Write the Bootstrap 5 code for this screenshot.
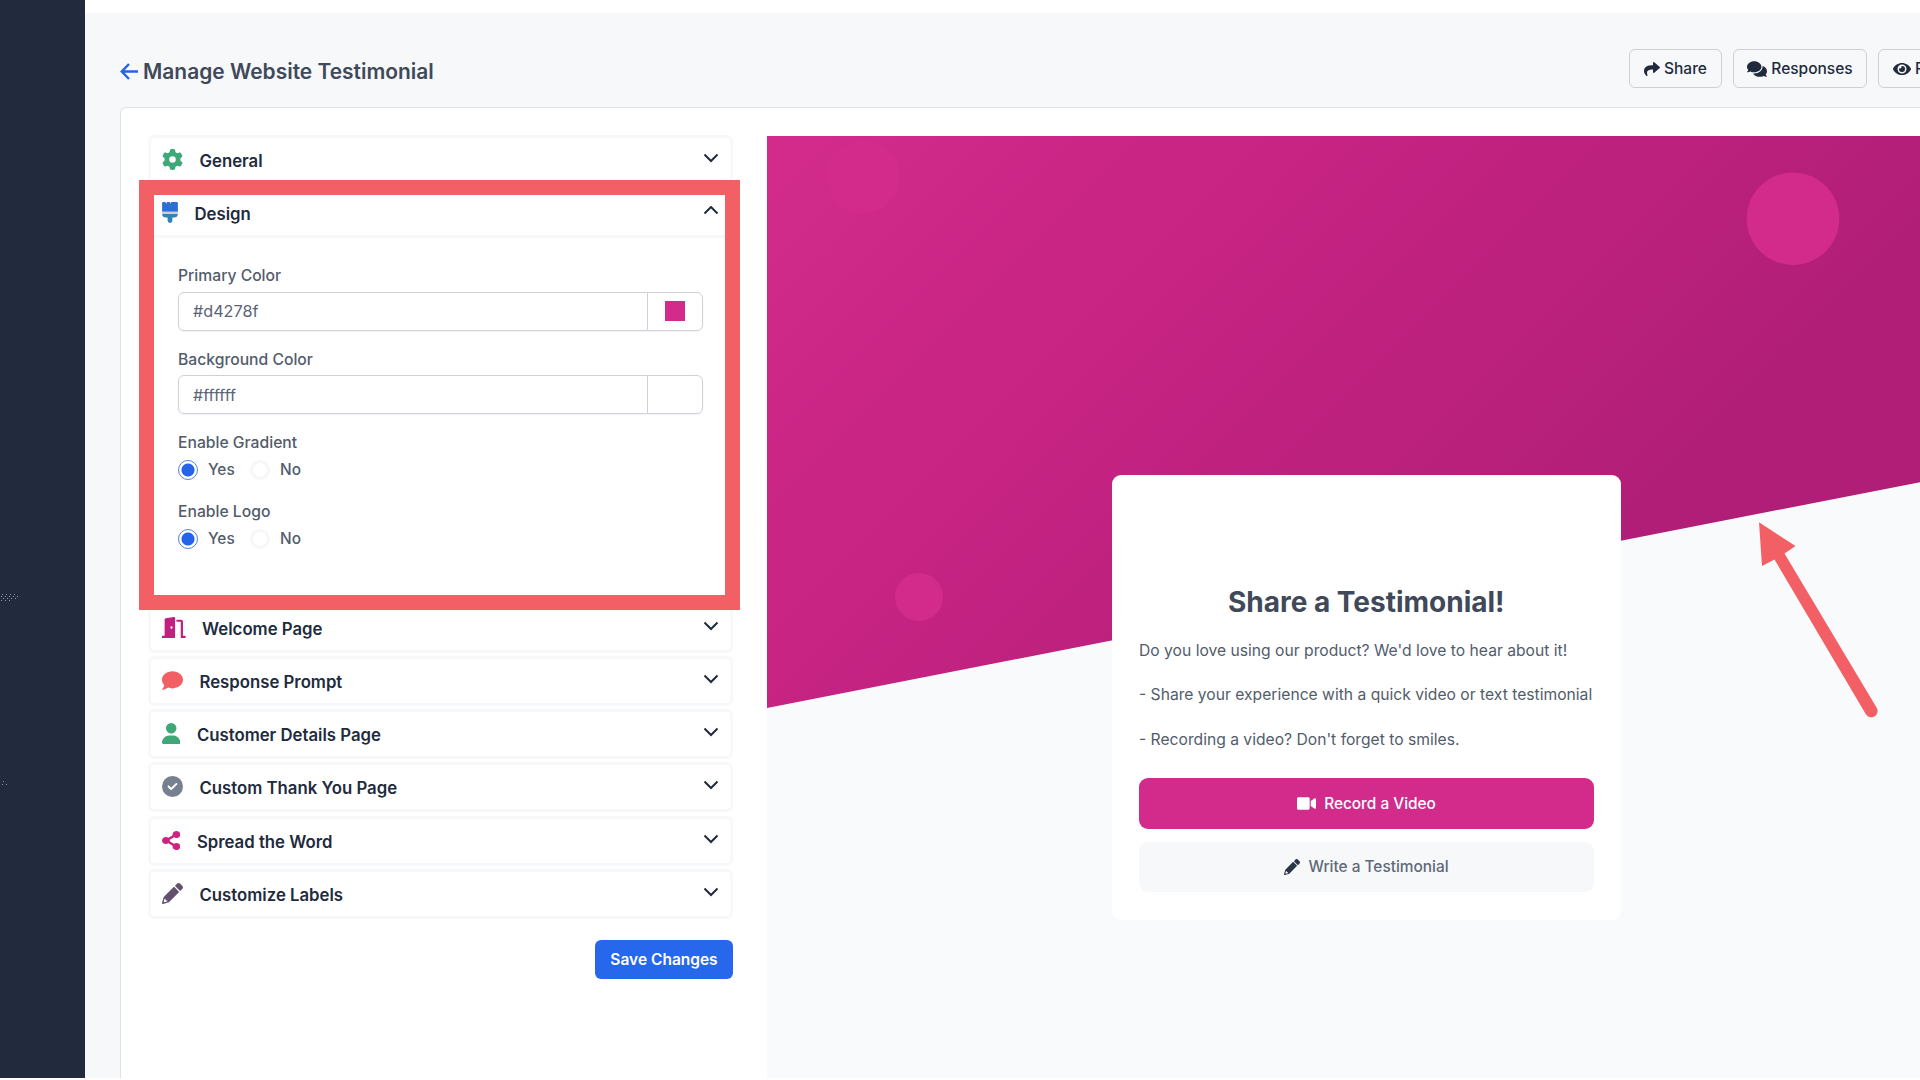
<!DOCTYPE html>
<html lang="en">
<head>
<meta charset="utf-8">
<meta name="viewport" content="width=device-width, initial-scale=1">
<title>Manage Website Testimonial</title>
<link href="https://cdn.jsdelivr.net/npm/bootstrap@5.3.0/dist/css/bootstrap.min.css" rel="stylesheet">
<style>
  body { font-family: Inter, "Liberation Sans", sans-serif; width: 1920px; height: 1080px; overflow: hidden; background: #fff; color: #525c6b; font-size: 15.4px; line-height: 24px; }
  svg { display: block; flex: none; fill: currentColor; }
  .shell { height: 1078px; }
  .side-rail { width: 85px; background: #212b3d; flex: none; color: #8c93a0; }
  .side-specks { left: 0; top: 590px; }
  .page-area { background: #f7f8fa; min-width: 0; }
  .top-strip { height: 13px; background: #fff; }
  .page-head { height: 94px; padding: 36px 0 0 35px; }
  .page-title { font-size: 20.95px; font-weight: 600; color: #3f4959; margin: 9px 0 0; line-height: 28px; }
  .title-text { margin-left: 4px; }
  .back-arrow { color: #2563eb; margin-top: 3.5px; }
  .head-actions { gap: 11px; margin-right: -70px; }
  .btn-outline-soft { height: 39px; border: 1px solid #cfcfd8; border-radius: 6px; padding: 0; font-size: 15.5px; font-weight: 500; color: #212b3d; gap: 4px; display: flex; align-items: center; justify-content: center; white-space: nowrap; }
  .w-share { width: 93px; }
  .w-responses { width: 134px; }
  .w-preview { width: 112px; justify-content: flex-start; padding-left: 14px; }
  .main-panel { margin-left: 35px; background: #fff; border: 1px solid #e0e1e7; border-right: 0; border-bottom: 0; border-top-left-radius: 6px; padding: 28px 0 0 27px; min-height: 0; }
  .settings { width: 585px; flex: none; gap: 3.2px; margin-top: -1px; }
  .setting { border: 3px solid #f7f8fa; border-radius: 6px; flex: none; background: #fff; }
  .setting-head { height: 44px; padding: 0 11.5px 0 11px; color: #212b3d; }
  .setting-head .glyph { margin-top: -1px; }
  .setting-head .chev { margin-top: -4px; }
  .setting-name { font-size: 16.75px; font-weight: 600; margin: 2px 0 0 16.5px; line-height: 24px; }
  .setting-body { height: 361.5px; border-top: 3px solid #f7f8fa; padding: 26px 27px 0 27px; }
  .field-label { font-size: 15.7px; font-weight: 500; line-height: 24px; margin: 0; }
  .color-field { height: 39px; margin: 3.5px 0 17px; border-radius: 6px; box-shadow: 0 1px 2px rgba(30,40,80,.06); }
  .color-field .form-control { border-color: #d0d0d9; color: #5a6474; font-size: 16.2px; padding: 0 14px; border-radius: 6px; }
  .color-field .input-group-text { width: 56px; border-color: #d0d0d9; background: #fff; justify-content: center; border-radius: 6px; padding: 0; }
  .swatch-box { width: 19.5px; height: 19.5px; background: #d22b8c; }
  .choice-row { height: 28px; margin: 1px 0 15.5px; font-weight: 500; }
  .dot { width: 20px; height: 20px; border-radius: 50%; border: 3px solid #f6f7f9; flex: none; margin-right: 10px; }
  .dot.on { border: 1px solid #5a7fd8; background: radial-gradient(circle, #2563eb 0 6px, #fff 7px); }
  .opt { width: 42px; }
  .btn-save { width: 138px; height: 39px; background: #2767ec; color: #fff; border-radius: 6px; font-size: 15.5px; font-weight: 600; margin-top: 18px; padding: 0; border: 0; }
  .callout-box { left: 138.7px; top: 179.5px; width: 601px; height: 430.5px; border: 15px solid #f26065; z-index: 5; }
  .preview { margin-left: 34px; background: #f9fafb; min-width: 0; padding-top: 339px; padding-left: 344.5px; }
  .preview-hero { left: 0; top: 0; }
  .testimonial { width: 509.5px; height: 445px; background: #fff; border-radius: 9px; padding: 109px 27.5px 0; }
  .testimonial h2 { font-size: 28px; font-weight: 700; color: #3f4959; text-align: center; line-height: 36px; margin: 0 0 19px; }
  .testimonial p { margin: 0 0 20.3px; line-height: 24px; white-space: nowrap; font-size: 15.67px; }
  .btn-cta { width: 100%; height: 50.5px; border-radius: 9px; border: 0; font-size: 15.4px; font-weight: 500; display: flex; align-items: center; justify-content: center; gap: 8.5px; padding: 0; }
  .btn-video { background: #d22b8c; color: #fff; margin-top: 26.5px; margin-bottom: 13px; }
  .btn-write { background: #f7f8fa; color: #5f6978; }
  .btn-write svg { color: #2b3548; }
  .callout-arrow { left: 1750px; top: 510px; z-index: 5; color: #f26065; }
</style>
<script src="https://cdn.jsdelivr.net/npm/bootstrap@5.3.0/dist/js/bootstrap.bundle.min.js"></script>
</head>
<body class="position-relative">
<svg class="d-none">
  <symbol id="pencil" viewBox="0 0 512 512"><path fill-rule="evenodd" d="M497.9 142.1l-46.1 46.1c-4.7 4.7-12.3 4.7-17 0l-111-111c-4.7-4.7-4.7-12.3 0-17l46.1-46.1c18.7-18.7 49.1-18.7 67.9 0l60.1 60.1c18.8 18.7 18.8 49.1 0 67.9zM284.2 99.8L41.6 342.4 .4 483.9c-2.9 16.4 11.4 30.6 27.8 27.8l141.5-41.3 242.6-242.6c4.7-4.7 4.7-12.3 0-17l-111-111c-4.8-4.7-12.4-4.7-17.1 0zM88 384v40h46l-10 28-62 18-20-20 18-62z"/></symbol>
  <symbol id="down" viewBox="0 0 16 10"><path d="M1.5 1.5 8 8l6.5-6.5" fill="none" stroke="currentColor" stroke-width="2"/></symbol>
</svg>
<div class="shell d-flex">
  <aside class="side-rail">
    <svg class="side-specks position-absolute" width="24" height="200"><path fill="none" stroke="currentColor" stroke-width="1" stroke-dasharray="1 3" d="M2 4.5h14M1 6.5h20M3 8.5h14M1 10.5h12M3 191.5h3M2 194.5h7"/></svg>
  </aside>
  <div class="page-area d-flex flex-column flex-grow-1">
    <div class="top-strip"></div>
    <header class="page-head d-flex justify-content-between align-items-start">
      <h1 class="page-title d-flex">
        <svg class="back-arrow" width="19" height="20" viewBox="0 0 19 20"><path d="M9 2 1.8 9.5 9 17M2 9.5h16" fill="none" stroke="currentColor" stroke-width="2.5"/></svg>
        <span class="title-text">Manage Website Testimonial</span>
      </h1>
      <div class="head-actions d-flex">
        <button class="btn btn-outline-soft w-share"><svg width="16" height="16" viewBox="0 0 512 512"><path d="M503.691 189.836L327.687 37.851C312.281 24.546 288 35.347 288 56.015v80.053C127.371 137.907 0 170.1 0 322.326c0 61.441 39.581 122.309 83.333 154.132 13.653 9.931 33.111-2.533 28.077-18.631C66.066 312.814 132.917 274.316 288 272.085V360c0 20.7 24.3 31.453 39.687 18.164l176.004-152c11.071-9.562 11.086-26.753 0-36.328z"/></svg>Share</button>
        <button class="btn btn-outline-soft w-responses"><svg width="20" height="18" viewBox="0 0 576 512"><path d="M416 192c0-88.4-93.1-160-208-160S0 103.6 0 192c0 34.3 14.1 65.9 38 92-13.4 30.2-35.5 54.2-35.8 54.5-2.2 2.3-2.8 5.7-1.5 8.7S4.8 352 8 352c36.6 0 66.9-12.3 88.7-25 32.2 15.7 70.3 25 111.3 25 114.9 0 208-71.6 208-160zm122 220c23.9-26 38-57.7 38-92 0-66.9-53.5-124.2-129.3-148.1.9 6.6 1.3 13.3 1.3 20.1 0 105.9-107.7 192-240 192-10.8 0-21.3-.8-31.7-1.9C207.8 439.6 281.8 480 368 480c41 0 79.1-9.2 111.3-25 21.8 12.7 52.1 25 88.7 25 3.2 0 6.1-1.9 7.3-4.8 1.3-2.9.7-6.3-1.5-8.7-.3-.3-22.4-24.2-35.8-54.5z"/></svg>Responses</button>
        <button class="btn btn-outline-soft w-preview"><svg width="18" height="16" viewBox="0 0 576 512"><path d="M572.52 241.4C518.29 135.59 410.93 64 288 64S57.68 135.64 3.48 241.41a32.35 32.35 0 0 0 0 29.19C57.71 376.41 165.07 448 288 448s230.32-71.64 284.52-177.41a32.35 32.35 0 0 0 0-29.19zM288 400a144 144 0 1 1 144-144 143.93 143.93 0 0 1-144 144zm0-240a95.31 95.31 0 0 0-25.31 3.79 47.85 47.85 0 0 1-66.9 66.9A95.78 95.78 0 1 0 288 160z"/></svg>Preview</button>
      </div>
    </header>
    <main class="main-panel d-flex flex-grow-1">
      <section class="settings d-flex flex-column">
        <div class="setting"><div class="setting-head d-flex align-items-center">
          <svg class="glyph" style="color:#3fa878" width="21" height="21" viewBox="0 0 512 512"><path d="M495.9 166.6c3.2 8.7 .5 18.4-6.4 24.6l-43.3 39.4c1.1 8.3 1.7 16.8 1.7 25.4s-.6 17.1-1.7 25.4l43.3 39.4c6.9 6.2 9.6 15.9 6.4 24.6c-4.4 11.9-9.7 23.3-15.8 34.3l-4.7 8.1c-6.6 11-14 21.4-22.1 31.2c-5.9 7.2-15.7 9.6-24.5 6.8l-55.7-17.7c-13.4 10.3-28.2 18.9-44 25.4l-12.5 57.1c-2 9.1-9 16.3-18.2 17.8c-13.8 2.3-28 3.5-42.5 3.5s-28.7-1.2-42.5-3.5c-9.2-1.5-16.2-8.7-18.2-17.8l-12.5-57.1c-15.8-6.5-30.6-15.1-44-25.4L83.1 425.9c-8.8 2.8-18.6 .3-24.5-6.8c-8.1-9.8-15.5-20.2-22.1-31.2l-4.7-8.1c-6.1-11-11.4-22.4-15.8-34.3c-3.2-8.7-.5-18.4 6.4-24.6l43.3-39.4C64.6 273.1 64 264.6 64 256s.6-17.1 1.7-25.4L22.4 191.2c-6.9-6.2-9.6-15.9-6.4-24.6c4.4-11.9 9.7-23.3 15.8-34.3l4.7-8.1c6.6-11 14-21.4 22.1-31.2c5.9-7.2 15.7-9.6 24.5-6.8l55.7 17.7c13.4-10.3 28.2-18.9 44-25.4l12.5-57.1c2-9.1 9-16.3 18.2-17.8C227.3 1.2 241.5 0 256 0s28.7 1.2 42.5 3.5c9.2 1.5 16.2 8.7 18.2 17.8l12.5 57.1c15.8 6.5 30.6 15.1 44 25.4l55.7-17.7c8.8-2.8 18.6-.3 24.5 6.8c8.1 9.8 15.5 20.2 22.1 31.2l4.7 8.1c6.1 11 11.4 22.4 15.8 34.3zM256 336a80 80 0 1 0 0-160 80 80 0 1 0 0 160z"/></svg>
          <span class="setting-name">General</span><svg class="chev ms-auto" width="16" height="10"><use href="#down"/></svg></div></div>
        <div class="setting"><div class="setting-head d-flex align-items-center">
          <svg class="glyph" width="16" height="21" viewBox="0 0 384 512"><path fill="#2b6fd6" d="M0 10 20 0h60l20 45L120 0h70l18 45L226 0h132l26 10v236H0z"/><path fill="#c9ccd6" d="M0 232h384v58H0z"/><path fill="#2f83b5" d="M0 290h384c0 60-45 86-90 86h-44v78a58 58 0 0 1-116 0v-78H90c-45 0-90-26-90-86z"/></svg>
          <span class="setting-name">Design</span><svg class="chev ms-auto" width="16" height="10" viewBox="0 0 16 10"><path d="M1.5 7.5 8 1l6.5 6.5" fill="none" stroke="currentColor" stroke-width="2"/></svg></div>
          <div class="setting-body">
            <label class="field-label d-block">Primary Color</label>
            <div class="color-field input-group"><input class="form-control" value="#d4278f"><span class="input-group-text"><span class="swatch-box"></span></span></div>
            <label class="field-label d-block">Background Color</label>
            <div class="color-field input-group"><input class="form-control" value="#ffffff"><span class="input-group-text"></span></div>
            <div class="field-label">Enable Gradient</div>
            <div class="choice-row d-flex align-items-center"><span class="dot on"></span><span class="opt">Yes</span><span class="dot"></span><span>No</span></div>
            <div class="field-label">Enable Logo</div>
            <div class="choice-row d-flex align-items-center"><span class="dot on"></span><span class="opt">Yes</span><span class="dot"></span><span>No</span></div>
          </div>
        </div>
        <div class="setting"><div class="setting-head d-flex align-items-center">
          <svg class="glyph" style="color:#c12080" width="23.6" height="21" viewBox="0 0 576 512"><path fill-rule="evenodd" d="M64 62c0-18 10-29 26-33L288 1c18-3 32 8 32 26v485H0v-52h64zM232 228a26 30 0 1 0 0 60 26 30 0 1 0 0-60z"/><path d="M352 64h112c27 0 48 21 48 48v348h64v52H458V118H352z"/></svg>
          <span class="setting-name">Welcome Page</span><svg class="chev ms-auto" width="16" height="10"><use href="#down"/></svg></div></div>
        <div class="setting"><div class="setting-head d-flex align-items-center">
          <svg class="glyph" style="color:#f26065" width="21" height="21" viewBox="0 0 512 512"><path d="M256 32C114.6 32 0 125.1 0 240c0 49.6 21.4 95 57 130.7C44.5 421.1 2.7 466 2.2 466.5c-2.2 2.3-2.8 5.7-1.5 8.7S4.8 480 8 480c66.3 0 116-31.8 140.6-51.4 32.7 12.3 69 19.4 107.4 19.4 141.4 0 256-93.1 256-208S397.4 32 256 32z"/></svg>
          <span class="setting-name">Response Prompt</span><svg class="chev ms-auto" width="16" height="10"><use href="#down"/></svg></div></div>
        <div class="setting"><div class="setting-head d-flex align-items-center">
          <svg class="glyph" style="color:#3fa878" width="18.4" height="21" viewBox="0 0 448 512"><path d="M224 256A128 128 0 1 0 224 0a128 128 0 1 0 0 256zm-45.7 48C79.8 304 0 383.8 0 482.3C0 498.7 13.3 512 29.7 512H418.3c16.4 0 29.7-13.3 29.7-29.7C448 383.8 368.2 304 269.7 304H178.3z"/></svg>
          <span class="setting-name">Customer Details Page</span><svg class="chev ms-auto" width="16" height="10"><use href="#down"/></svg></div></div>
        <div class="setting"><div class="setting-head d-flex align-items-center">
          <svg class="glyph" style="color:#76808e" width="21" height="21" viewBox="0 0 512 512"><path d="M256 512A256 256 0 1 0 256 0a256 256 0 1 0 0 512zM369 209L241 337c-9.4 9.4-24.6 9.4-33.9 0l-64-64c-9.4-9.4-9.4-24.6 0-33.9s24.6-9.4 33.9 0l47 47L335 175c9.4-9.4 24.6-9.4 33.9 0s9.4 24.6 0 33.9z"/></svg>
          <span class="setting-name">Custom Thank You Page</span><svg class="chev ms-auto" width="16" height="10"><use href="#down"/></svg></div></div>
        <div class="setting"><div class="setting-head d-flex align-items-center">
          <svg class="glyph" style="color:#cc2481" width="18.4" height="21" viewBox="0 0 448 512"><path d="M352 320c-22.608 0-43.387 7.819-59.79 20.895l-102.486-64.054a96.551 96.551 0 0 0 0-41.683l102.486-64.054C308.613 184.181 329.392 192 352 192c53.019 0 96-42.981 96-96S405.019 0 352 0s-96 42.981-96 96c0 7.158.79 14.13 2.276 20.841L155.79 180.895C139.387 167.819 118.608 160 96 160c-53.019 0-96 42.981-96 96s42.981 96 96 96c22.608 0 43.387-7.819 59.79-20.895l102.486 64.054A96.301 96.301 0 0 0 256 416c0 53.019 42.981 96 96 96s96-42.981 96-96-42.981-96-96-96z" transform="translate(0 22) scale(1 .915)"/></svg>
          <span class="setting-name">Spread the Word</span><svg class="chev ms-auto" width="16" height="10"><use href="#down"/></svg></div></div>
        <div class="setting"><div class="setting-head d-flex align-items-center">
          <svg class="glyph" style="color:#63506c" width="21" height="21"><use href="#pencil"/></svg>
          <span class="setting-name">Customize Labels</span><svg class="chev ms-auto" width="16" height="10"><use href="#down"/></svg></div></div>
        <button class="btn btn-save align-self-end">Save Changes</button>
      </section>
      <section class="preview position-relative flex-grow-1">
        <svg class="preview-hero position-absolute" width="1154" height="573" viewBox="0 0 1154 573">
          <defs><linearGradient id="hero" gradientUnits="userSpaceOnUse" x1="0" y1="0" x2="640" y2="640"><stop offset="0" stop-color="#d22b8c"/><stop offset=".45" stop-color="#c62383"/><stop offset="1" stop-color="#b01e77"/></linearGradient></defs>
          <path fill="url(#hero)" d="M0 0H1154V346L0 572z"/>
          <g fill="#d22b8c"><circle cx="96" cy="40.7" r="36.5"/><circle cx="1026" cy="82.7" r="46.3"/><circle cx="152" cy="461" r="24"/></g>
        </svg>
        <article class="testimonial position-relative">
          <h2>Share a Testimonial!</h2>
          <p>Do you love using our product? We'd love to hear about it!</p>
          <p>- Share your experience with a quick video or text testimonial</p>
          <p>- Recording a video? Don't forget to smiles.</p>
          <button class="btn btn-cta btn-video"><svg width="19" height="17" viewBox="0 0 576 512"><path d="M336.2 64H47.8C21.4 64 0 85.4 0 111.8v288.4C0 426.6 21.4 448 47.8 448h288.4c26.4 0 47.8-21.4 47.8-47.8V111.8c0-26.4-21.4-47.8-47.8-47.8zm189.4 37.7L416 177.3v157.4l109.6 75.5c21.2 14.6 50.4-.3 50.4-25.8V127.5c0-25.4-29.1-40.4-50.4-25.8z"/></svg>Record a Video</button>
          <button class="btn btn-cta btn-write"><svg width="16" height="16"><use href="#pencil"/></svg>Write a Testimonial</button>
        </article>
      </section>
    </main>
  </div>
</div>
<div class="callout-box position-absolute"></div>
<svg class="callout-arrow position-absolute" width="140" height="220" viewBox="1750 510 140 220"><path d="M1759 522.3 1795.5 546 1784.5 553.5 1876.5 707.5A6 6 0 0 1 1866 714.5L1774.5 559.5 1762 566z"/></svg>
</body>
</html>
